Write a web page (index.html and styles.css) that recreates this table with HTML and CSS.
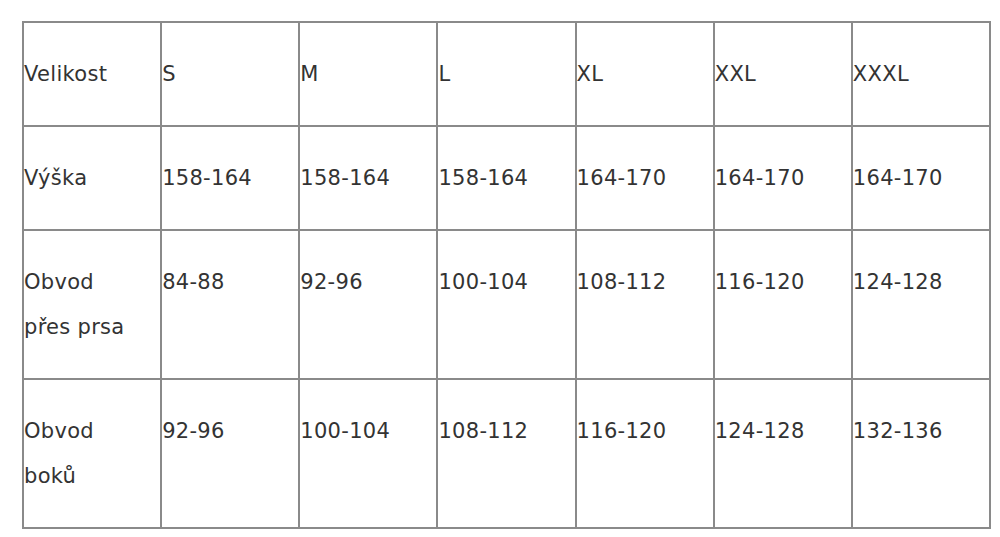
FILE: index.html
```html
<!DOCTYPE html>
<html lang="cs">
<head>
<meta charset="UTF-8" />
<meta name="viewport" content="width=device-width, initial-scale=1.0"/>
<title>Velikostní tabulka</title>
<link rel="stylesheet" href="styles.css">
</head>
<body>
<table class="sizes">
  <tr>
    <td>Velikost</td>
    <td>S</td>
    <td>M</td>
    <td>L</td>
    <td>XL</td>
    <td>XXL</td>
    <td>XXXL</td>
  </tr>
  <tr>
    <td>Výška</td>
    <td>158-164</td>
    <td>158-164</td>
    <td>158-164</td>
    <td>164-170</td>
    <td>164-170</td>
    <td>164-170</td>
  </tr>
  <tr>
    <td>Obvod přes prsa</td>
    <td>84-88</td>
    <td>92-96</td>
    <td>100-104</td>
    <td>108-112</td>
    <td>116-120</td>
    <td>124-128</td>
  </tr>
  <tr>
    <td>Obvod boků</td>
    <td>92-96</td>
    <td>100-104</td>
    <td>108-112</td>
    <td>116-120</td>
    <td>124-128</td>
    <td>132-136</td>
  </tr>
</table>
</body>
</html>
```

FILE: styles.css
```css
body {
  margin: 0;
  padding: 21px 22px;
  background: #fff;
  font-family: "DejaVu Sans", Verdana, sans-serif;
  color: #333;
}

.sizes {
  width: 969px;
  border-collapse: collapse;
  table-layout: fixed;
  border: 2px solid #8a8a8a;
}

.sizes td {
  border: 2px solid #8a8a8a;
  padding: 29px 0 28px;
  vertical-align: top;
  font-size: 21px;
  line-height: 45px;
  letter-spacing: 0.3px;
}

.sizes td:first-child {
  padding-right: 20px;
}
```
